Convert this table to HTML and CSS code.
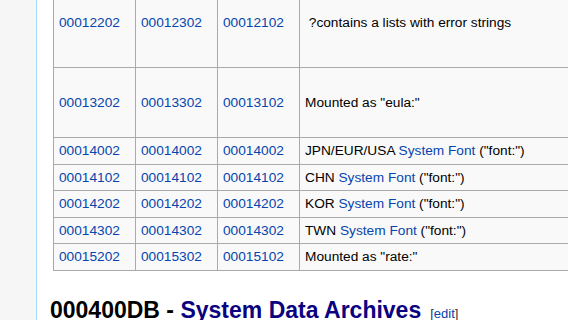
FILE: index.html
```html
<!DOCTYPE html>
<html>
<head>
<meta charset="utf-8">
<link rel="stylesheet" href="styles.css">
</head>
<body>
<div class="page">
  <div class="sidebar"></div>
  <div class="content">
    <table class="wikitable">
      <colgroup><col class="c1"><col class="c2"><col class="c3"><col class="c4"></colgroup>
      <tr class="r-first">
        <td><a href="#">00012202</a></td><td><a href="#">00012302</a></td><td><a href="#">00012102</a></td>
        <td>&nbsp;?contains a lists with error strings</td>
      </tr>
      <tr class="r-tall">
        <td><a href="#">00013202</a></td><td><a href="#">00013302</a></td><td><a href="#">00013102</a></td>
        <td>Mounted as "eula:"</td>
      </tr>
      <tr>
        <td><a href="#">00014002</a></td><td><a href="#">00014002</a></td><td><a href="#">00014002</a></td>
        <td>JPN/EUR/USA <a href="#">System Font</a> ("font:")</td>
      </tr>
      <tr>
        <td><a href="#">00014102</a></td><td><a href="#">00014102</a></td><td><a href="#">00014102</a></td>
        <td>CHN <a href="#">System Font</a> ("font:")</td>
      </tr>
      <tr>
        <td><a href="#">00014202</a></td><td><a href="#">00014202</a></td><td><a href="#">00014202</a></td>
        <td>KOR <a href="#">System Font</a> ("font:")</td>
      </tr>
      <tr>
        <td><a href="#">00014302</a></td><td><a href="#">00014302</a></td><td><a href="#">00014302</a></td>
        <td>TWN <a href="#">System Font</a> ("font:")</td>
      </tr>
      <tr>
        <td><a href="#">00015202</a></td><td><a href="#">00015302</a></td><td><a href="#">00015102</a></td>
        <td>Mounted as "rate:"</td>
      </tr>
    </table>
    <h2 class="heading">000400DB - <a class="visited" href="#">System Data Archives</a><span class="editsection">[<a href="#">edit</a>]</span></h2>
  </div>
</div>
</body>
</html>
```

FILE: styles.css
```css
html, body {
  margin: 0;
  padding: 0;
  background: #ffffff;
}
body {
  font-family: "Liberation Sans", Arial, sans-serif;
  color: #000;
  overflow: hidden;
  width: 568px;
  height: 320px;
}
.page {
  display: flex;
  height: 320px;
}
.sidebar {
  width: 36px;
  flex: 0 0 36px;
  background: #f6f6f6;
  border-right: 1px solid #a7d7f9;
}
.content {
  flex: 1;
  min-width: 0;
  padding-left: 13px;
  overflow: hidden;
}
.wikitable {
  border-collapse: collapse;
  table-layout: fixed;
  width: 650px;
  margin: -1px 0 0 3px;
  background: #f9f9f9;
  font-size: 13.7px;
  line-height: 19.6px;
}
.c1, .c2, .c3 { width: 82px; }
.c4 { width: 404px; }
.wikitable td {
  border: 1px solid #aaaaaa;
  padding: 3px 5px;
  vertical-align: middle;
  white-space: nowrap;
  color: #000;
}
.wikitable .r-first td {
  padding-top: 13px;
  padding-bottom: 34.4px;
  vertical-align: top;
}
.wikitable .r-tall td {
  padding-top: 24.7px;
  padding-bottom: 24.7px;
}
a {
  color: #0645ad;
  text-decoration: none;
}
.heading {
  margin: 26px 0 0 0;
  font-size: 23px;
  font-weight: bold;
  line-height: 26.4px;
  white-space: nowrap;
}
.heading a.visited {
  color: #0b0080;
  text-decoration: underline;
}
.editsection {
  font-size: 13px;
  font-weight: normal;
  margin-left: 9px;
  color: #333;
}
```
